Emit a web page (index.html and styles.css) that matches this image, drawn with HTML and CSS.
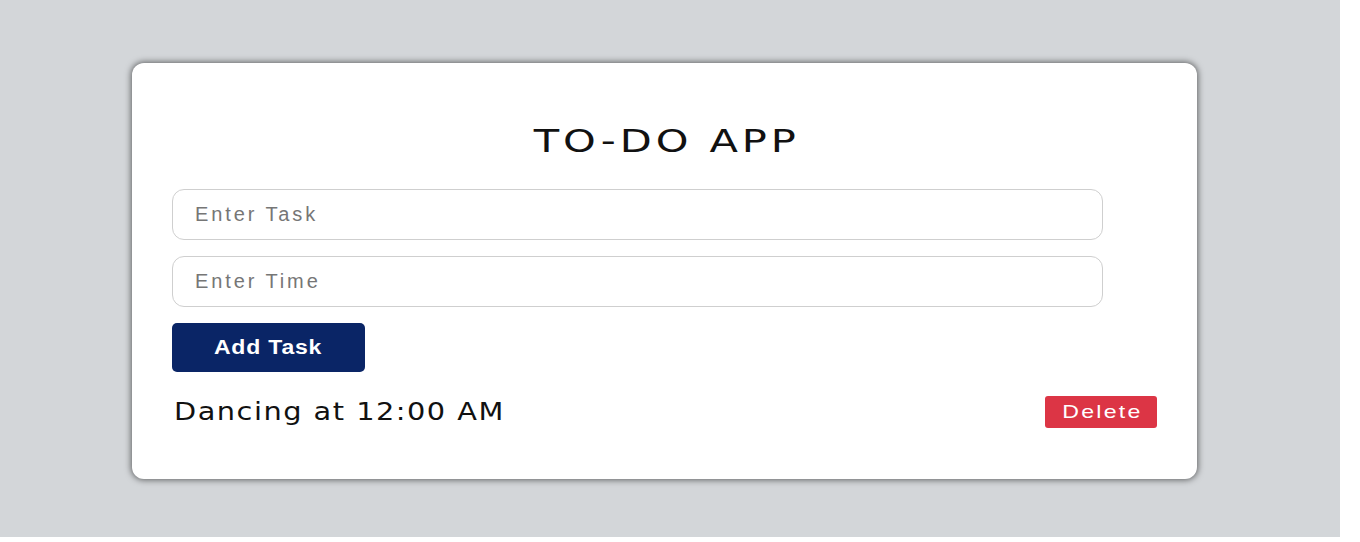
FILE: index.html
```html
<!DOCTYPE html>
<html lang="en">
<head>
<meta charset="utf-8">
<title>To-Do App</title>
<link rel="stylesheet" href="styles.css">
</head>
<body>
<div class="page">
  <div class="card">
    <h1 class="title"><span class="title-text">TO-DO APP</span></h1>
    <div class="form">
      <input class="field" type="text" placeholder="Enter Task">
      <input class="field" type="text" placeholder="Enter Time">
      <button class="add-btn" type="button"><span class="add-label">Add Task</span></button>
    </div>
    <ul class="list">
      <li class="item">
        <span class="item-text">Dancing at 12:00 AM</span>
        <button class="del-btn" type="button"><span class="del-label">Delete</span></button>
      </li>
    </ul>
  </div>
</div>
</body>
</html>
```
FILE: styles.css
```css
html, body {
  margin: 0;
  padding: 0;
  background: #ffffff;
}

.page {
  width: 1340px;
  height: 537px;
  background: #d3d6d9;
  padding-top: 63px;
  padding-left: 132px;
  box-sizing: border-box;
  overflow: hidden;
}

.card {
  width: 1065px;
  box-sizing: border-box;
  background: #ffffff;
  border-radius: 12px;
  box-shadow: 0 0 6px 1px rgba(0, 0, 0, 0.55);
  padding: 58px 40px 51px 40px;
  display: flex;
  flex-direction: column;
}

.title {
  margin: 0 0 28px 0;
  font-family: "DejaVu Sans", sans-serif;
  font-weight: normal;
  font-size: 32px;
  line-height: 40px;
  text-align: center;
  color: #111111;
}

.title-text {
  display: inline-block;
  letter-spacing: 3px;
  padding-left: 3px;
  transform: scaleX(1.3);
}

.form {
  display: flex;
  flex-direction: column;
  align-items: flex-start;
  gap: 16px;
}

.field {
  width: 931px;
  height: 51px;
  box-sizing: border-box;
  margin: 0;
  border: 1px solid #cfcfcf;
  border-radius: 12px;
  padding: 0 22px;
  font-family: "Liberation Sans", Arial, sans-serif;
  font-size: 20px;
  letter-spacing: 2.9px;
  color: #222222;
  background: #ffffff;
  outline: none;
}

.field::placeholder {
  color: #767676;
}

.add-btn {
  width: 193px;
  height: 49px;
  margin: 0;
  border: none;
  border-radius: 5px;
  background: #0a2566;
  color: #ffffff;
  font-family: "Liberation Sans", Arial, sans-serif;
  font-weight: bold;
  font-size: 20px;
  padding: 0;
}

.add-label {
  display: inline-block;
  letter-spacing: 0.7px;
  transform: scaleX(1.15);
}

.list {
  list-style: none;
  margin: 24px 0 0 0;
  padding: 0;
}

.item {
  display: flex;
  align-items: center;
  justify-content: space-between;
  height: 32px;
}

.item-text {
  display: inline-block;
  font-family: "DejaVu Sans", sans-serif;
  font-size: 24px;
  letter-spacing: 1.25px;
  color: #111111;
  margin-left: 2px;
  transform: scaleX(1.2);
  transform-origin: left center;
}

.del-btn {
  width: 112px;
  height: 32px;
  margin: 0;
  border: none;
  border-radius: 3px;
  background: #dc3545;
  color: #ffffff;
  font-family: "Liberation Sans", Arial, sans-serif;
  font-size: 18.5px;
  padding: 0;
}

.del-label {
  display: inline-block;
  letter-spacing: 1.8px;
  padding-left: 2px;
  transform: scaleX(1.25);
}
```
